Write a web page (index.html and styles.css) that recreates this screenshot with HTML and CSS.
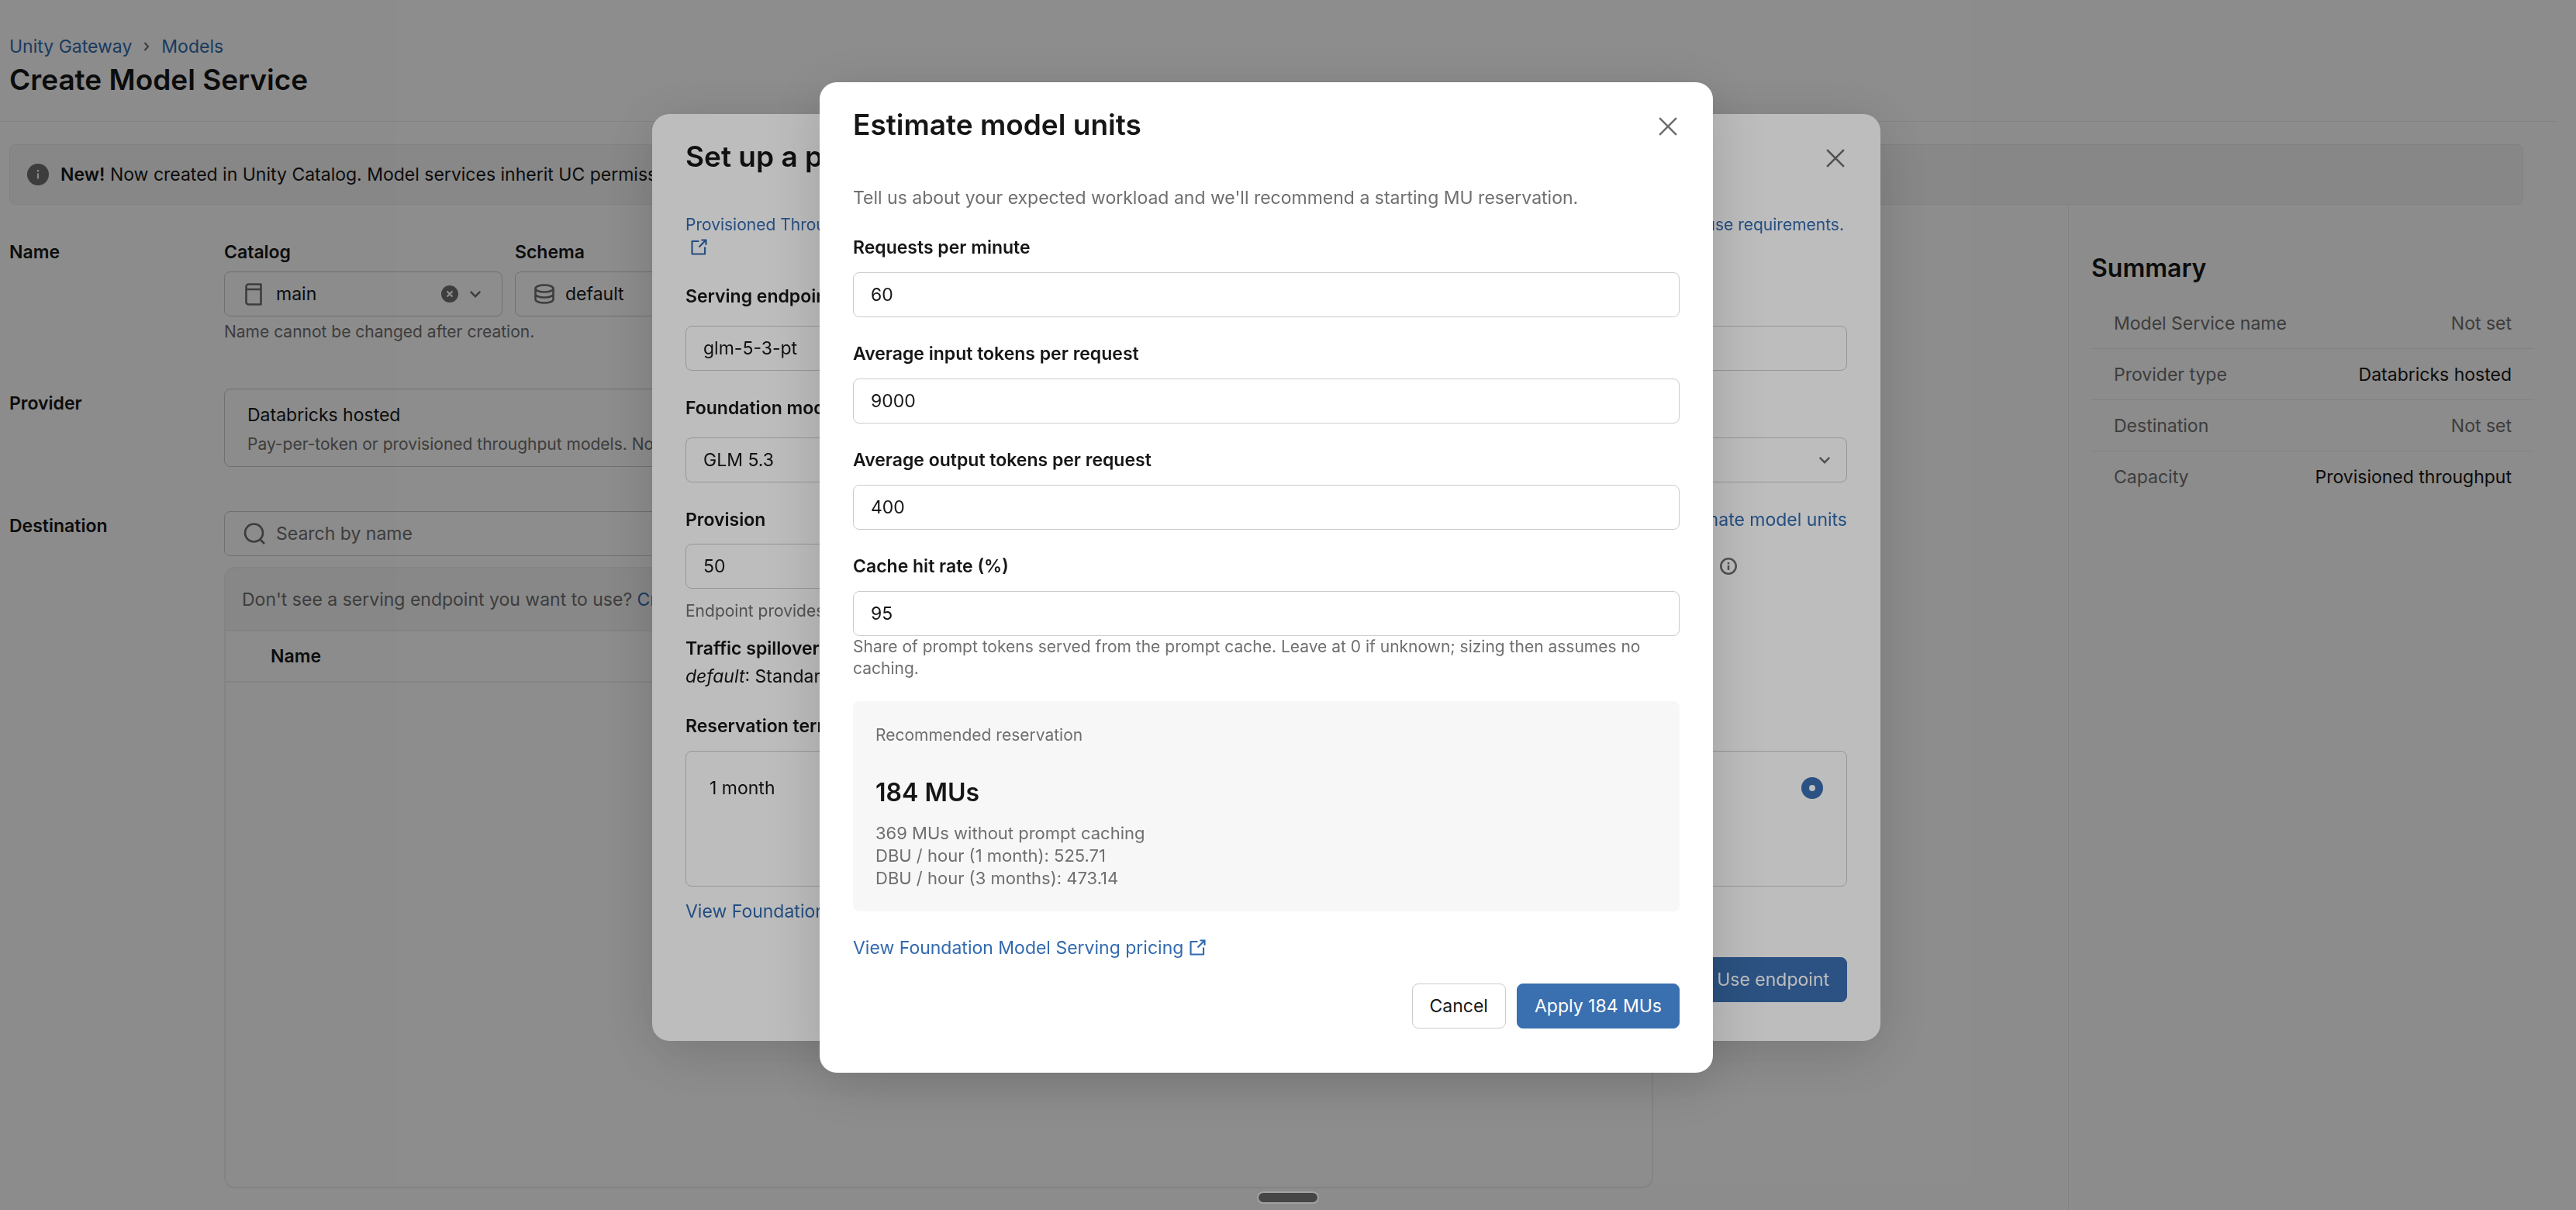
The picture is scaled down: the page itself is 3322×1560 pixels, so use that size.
FILE: index.html
```html
<!DOCTYPE html>
<html lang="en">
<head>
    <meta charset="UTF-8">
    <meta name="viewport" content="width=device-width, initial-scale=1.0">
    <title>Create Model Service</title>
    <link rel="stylesheet" href="styles.css">
</head>
<body>
    <!-- shared icons -->
    <svg class="sprite" aria-hidden="true">
        <symbol id="icon-close" viewBox="0 0 16 16">
            <path d="M2.2 2.2l11.6 11.6M13.8 2.2L2.2 13.8" fill="none" stroke="currentColor" stroke-width="1.4"/>
        </symbol>
        <symbol id="icon-chevron" viewBox="0 0 16 16">
            <path d="M3 5.5l5 5 5-5" fill="none" stroke="currentColor" stroke-width="2"/>
        </symbol>
        <symbol id="icon-external" viewBox="0 0 16 16">
            <path fill="currentColor" d="M10 1h5v5h-1.5V3.56L8.53 8.53 7.47 7.47l4.97-4.97H10z"/>
            <path fill="currentColor" d="M1 2.75A.75.75 0 0 1 1.75 2H8v1.5H2.5v10h10V8H14v6.25a.75.75 0 0 1-.75.75H1.75a.75.75 0 0 1-.75-.75z"/>
        </symbol>
    </svg>

    <div class="page">
        <header class="page-header">
            <nav class="breadcrumbs">
                <a href="#">Unity Gateway</a>
                <svg class="crumb-arrow" viewBox="0 0 8 12"><path d="M1.5 1l4.5 5-4.5 5" fill="none" stroke="currentColor" stroke-width="2"/></svg>
                <a href="#">Models</a>
            </nav>
            <h1>Create Model Service</h1>
        </header>

        <div class="banner">
            <svg class="banner-icon" viewBox="0 0 28 28">
                <circle cx="14" cy="14" r="14" fill="currentColor"/>
                <path d="M14 12.5v7M14 8v2.4" stroke="#f6f6f6" stroke-width="2.2"/>
            </svg>
            <p><strong>New!</strong> Now created in Unity Catalog. Model services inherit UC permissions.</p>
        </div>

        <div class="content">
            <main class="form">
                <section class="form-row">
                    <h3>Name</h3>
                    <div>
                        <div class="name-fields">
                            <div class="name-field">
                                <label for="catalog">Catalog</label>
                                <div class="control">
                                    <svg class="catalog-icon" viewBox="0 0 22 29">
                                        <path d="M20.5 1.5v26H4.5a3 3 0 0 1-3-3v-20a3 3 0 0 1 3-3zM1.8 8h18.7" fill="none" stroke="currentColor" stroke-width="2.6" stroke-linejoin="round"/>
                                    </svg>
                                    <select id="catalog"><option>main</option></select>
                                    <button type="button" class="clear" aria-label="Clear catalog">
                                        <svg viewBox="0 0 22 22">
                                            <circle cx="11" cy="11" r="11" fill="currentColor"/>
                                            <path d="M7.5 7.5l7 7M14.5 7.5l-7 7" stroke="#fff" stroke-width="2.2"/>
                                        </svg>
                                    </button>
                                    <svg class="chevron"><use href="#icon-chevron"/></svg>
                                </div>
                            </div>
                            <div class="name-field">
                                <label for="schema">Schema</label>
                                <div class="control">
                                    <svg class="schema-icon" viewBox="0 0 26 26">
                                        <g fill="none" stroke="currentColor" stroke-width="2.6">
                                            <ellipse cx="13" cy="6" rx="11.5" ry="4.5"/>
                                            <path d="M1.5 6v14c0 2.5 5 4.5 11.5 4.5s11.5-2 11.5-4.5V6M1.5 13c0 2.5 5 4.5 11.5 4.5s11.5-2 11.5-4.5"/>
                                        </g>
                                    </svg>
                                    <select id="schema"><option>default</option></select>
                                    <svg class="chevron"><use href="#icon-chevron"/></svg>
                                </div>
                            </div>
                        </div>
                        <p class="hint">Name cannot be changed after creation.</p>
                    </div>
                </section>

                <section class="form-row">
                    <h3 class="beside-box">Provider</h3>
                    <div class="provider-card">
                        <p>Databricks hosted</p>
                        <p class="small">Pay-per-token or provisioned throughput models. No setup required.</p>
                    </div>
                </section>

                <section class="form-row destination">
                    <h3 class="beside-box">Destination</h3>
                    <div class="destination-body">
                        <div class="control">
                            <svg class="search-icon" viewBox="0 0 28 28">
                                <circle cx="13.5" cy="13" r="11.5" fill="none" stroke="currentColor" stroke-width="2.6"/>
                                <path d="M21 21l6 6" stroke="currentColor" stroke-width="2.6"/>
                            </svg>
                            <input type="text" placeholder="Search by name" aria-label="Search by name">
                        </div>
                        <div class="endpoint-panel">
                            <p class="endpoint-note">Don't see a serving endpoint you want to use? <a href="#">Create</a></p>
                            <table>
                                <thead>
                                    <tr><th>Name</th></tr>
                                </thead>
                            </table>
                        </div>
                    </div>
                </section>
            </main>

            <aside class="summary">
                <h2>Summary</h2>
                <dl>
                    <div><dt>Model Service name</dt><dd class="unset">Not set</dd></div>
                    <div><dt>Provider type</dt><dd>Databricks hosted</dd></div>
                    <div><dt>Destination</dt><dd class="unset">Not set</dd></div>
                    <div><dt>Capacity</dt><dd>Provisioned throughput</dd></div>
                </dl>
            </aside>
        </div>
    </div>

    <!-- Provisioned throughput endpoint -->
    <div class="backdrop"></div>
    <div class="modal-wrap">
        <div class="modal modal-endpoint" role="dialog" aria-labelledby="endpoint-title">
            <div class="modal-header">
                <h2 id="endpoint-title">Set up a provisioned endpoint</h2>
                <button type="button" class="close" aria-label="Close"><svg><use href="#icon-close"/></svg></button>
            </div>
            <a href="#" class="terms">
                <span class="terms-line"><span>Provisioned Throughput endpoints are subject to</span> <span>these model license and use requirements.</span></span>
                <svg class="external"><use href="#icon-external"/></svg>
            </a>
            <div class="endpoint-field">
                <label for="endpoint-name">Serving endpoint name</label>
                <input type="text" id="endpoint-name" class="text-input" value="glm-5-3-pt">
            </div>
            <div class="endpoint-field">
                <label for="foundation-model">Foundation model</label>
                <div class="control model-select">
                    <select id="foundation-model"><option>GLM 5.3</option></select>
                    <svg class="chevron"><use href="#icon-chevron"/></svg>
                </div>
            </div>
            <div class="provision">
                <div class="provision-label">
                    <label for="provision">Provision</label>
                    <a href="#">Estimate model units</a>
                </div>
                <div class="provision-row">
                    <input type="text" id="provision" class="text-input" value="50">
                    <svg class="info-icon" viewBox="0 0 22 22">
                        <circle cx="11" cy="11" r="9.7" fill="none" stroke="currentColor" stroke-width="2.6"/>
                        <path d="M11 10v6M11 6v2.4" stroke="currentColor" stroke-width="2.6"/>
                    </svg>
                </div>
                <p class="small">Endpoint provides reserved capacity.</p>
            </div>
            <div class="spillover">
                <h4>Traffic spillover</h4>
                <p><em>default</em>: Standard</p>
            </div>
            <h4>Reservation term</h4>
            <div class="term-card">
                <label for="term-month">1 month</label>
                <input type="radio" id="term-month" name="term" checked>
            </div>
            <a href="#" class="pricing">View Foundation Model Serving pricing</a>
            <div class="modal-footer">
                <button type="button" class="btn btn-primary">Use endpoint</button>
            </div>
        </div>
    </div>

    <!-- Model unit estimate -->
    <div class="backdrop"></div>
    <div class="modal-wrap">
        <form class="modal modal-estimate" role="dialog" aria-labelledby="estimate-title">
            <div class="modal-header">
                <h2 id="estimate-title">Estimate model units</h2>
                <button type="button" class="close" aria-label="Close"><svg><use href="#icon-close"/></svg></button>
            </div>
            <p class="intro">Tell us about your expected workload and we'll recommend a starting MU reservation.</p>
            <div class="estimate-fields">
                <div class="field">
                    <label for="rpm">Requests per minute</label>
                    <input type="text" id="rpm" class="text-input" value="60">
                </div>
                <div class="field">
                    <label for="input-tokens">Average input tokens per request</label>
                    <input type="text" id="input-tokens" class="text-input" value="9000">
                </div>
                <div class="field">
                    <label for="output-tokens">Average output tokens per request</label>
                    <input type="text" id="output-tokens" class="text-input" value="400">
                </div>
                <div class="field">
                    <label for="cache-rate">Cache hit rate (%)</label>
                    <input type="text" id="cache-rate" class="text-input" value="95">
                    <p class="small">Share of prompt tokens served from the prompt cache. Leave at 0 if unknown; sizing then assumes no caching.</p>
                </div>
            </div>
            <div class="result">
                <p class="small">Recommended reservation</p>
                <p class="result-value">184 MUs</p>
                <ul>
                    <li>369 MUs without prompt caching</li>
                    <li>DBU / hour (1 month): 525.71</li>
                    <li>DBU / hour (3 months): 473.14</li>
                </ul>
            </div>
            <a href="#" class="pricing">View Foundation Model Serving pricing <svg class="external"><use href="#icon-external"/></svg></a>
            <div class="modal-footer">
                <button type="button" class="btn">Cancel</button>
                <button type="submit" class="btn btn-primary">Apply 184 MUs</button>
            </div>
        </form>
    </div>

    <div class="drag-handle"></div>
</body>
</html>
```

FILE: styles.css
```css
* {
    box-sizing: border-box;
}

body {
    margin: 0;
    font-family: Inter, "Liberation Sans", sans-serif;
    font-size: 23px;
    line-height: 32px;
    color: #161616;
    background-color: #fff;
    overflow: hidden;
}

h1, h2, h3, h4, p, dl, dd, ul {
    margin: 0;
    padding: 0;
}

h1, h2 {
    font-size: 37px;
    line-height: 54px;
    font-weight: 600;
}

h3, h4, label, strong {
    font-size: 23px;
    font-weight: 600;
}

a {
    color: #326aae;
    text-decoration: none;
}

input, select, button {
    font: inherit;
    color: inherit;
}

.sprite {
    display: none;
}

.small {
    font-size: 21px;
    line-height: 29px;
    color: #6f6f6f;
}

/* Page */
.page {
    display: flex;
    flex-direction: column;
    min-height: 100vh;
    margin-right: 25px;
}

.page-header {
    padding: 44px 12px 26px;
    border-bottom: 1px solid #ebebeb;
}

.breadcrumbs {
    display: flex;
    align-items: center;
    gap: 15px;
}

.crumb-arrow {
    width: 8px;
    height: 12px;
    color: #6f6f6f;
}

.banner {
    display: flex;
    align-items: center;
    gap: 15px;
    margin: 29px 43px 0 12px;
    padding: 22px;
    border: 1px solid #ebebeb;
    border-radius: 8px;
    background-color: #f6f6f6;
}

.banner-icon {
    width: 28px;
    height: 28px;
    color: #6f6f6f;
}

.content {
    flex: 1;
    display: flex;
    justify-content: space-between;
}

/* Form */
.form {
    display: flex;
    flex-direction: column;
    gap: 57px;
    width: 100%;
    max-width: 2132px;
    padding: 45px 0 28px 12px;
}

.form-row {
    display: grid;
    grid-template-columns: 277px 1fr;
}

.beside-box {
    padding-top: 3px;
}

.name-fields {
    display: flex;
    gap: 16px;
}

.name-field {
    width: 359px;
}

.name-field label {
    display: block;
    margin-bottom: 9px;
}

.control {
    display: flex;
    align-items: center;
    height: 58px;
    padding: 0 24px;
    border: 1px solid #cbcbcb;
    border-radius: 8px;
}

.control select, .control input {
    flex: 1;
    min-width: 0;
    padding: 0;
    border: none;
    background: none;
    appearance: none;
    outline: none;
}

.control input::placeholder {
    color: #6f6f6f;
    opacity: 1;
}

.control svg {
    flex: none;
    color: #6f6f6f;
}

.catalog-icon {
    width: 22px;
    height: 29px;
    margin: 0 18px 0 2px;
}

.schema-icon {
    width: 26px;
    height: 26px;
    margin-right: 14px;
}

.search-icon {
    width: 28px;
    height: 28px;
    margin-right: 14px;
}

.clear {
    display: flex;
    margin-right: 12px;
    padding: 0;
    border: none;
    background: none;
}

.clear svg {
    width: 22px;
    height: 22px;
}

.chevron {
    width: 20px;
    height: 20px;
}

.hint {
    margin-top: 4px;
    font-size: 21px;
    color: #6f6f6f;
}

.provider-card {
    padding: 17px 29px 14px;
    border: 1px solid #cbcbcb;
    border-radius: 8px;
}

.provider-card .small {
    margin-top: 7px;
}

.destination {
    flex: 1;
}

.destination-body {
    display: flex;
    flex-direction: column;
    gap: 14px;
}

.endpoint-panel {
    flex: 1;
    border: 2px solid #efefef;
    border-radius: 14px;
    overflow: hidden;
}

.endpoint-note {
    padding: 24px 21px 23px;
    border-bottom: 2px solid #efefef;
    background-color: #f6f6f6;
    color: #6f6f6f;
}

.endpoint-panel table {
    width: 100%;
    border-collapse: collapse;
}

.endpoint-panel th {
    padding: 16px 58px;
    border-bottom: 2px solid #efefef;
    font-weight: 600;
    text-align: left;
}

/* Summary */
.summary {
    flex: none;
    width: 630px;
    padding: 60px 29px 0;
    border-left: 1px solid #efefef;
}

.summary h2 {
    margin-bottom: 16px;
    font-size: 32px;
    line-height: 44px;
}

.summary dl div {
    display: flex;
    justify-content: space-between;
    padding: 17px 29px 16px;
    border-bottom: 1px solid #ebebeb;
}

.summary dl div:last-child {
    border-bottom: none;
}

.summary dt, .summary .unset {
    color: #6f6f6f;
}

/* Modals */
.backdrop {
    position: fixed;
    inset: 0;
    background-color: rgba(0, 0, 0, 0.26);
}

.modal-wrap {
    position: fixed;
    inset: 0;
    display: flex;
    align-items: center;
    justify-content: center;
    padding: 0 56px 72px 0;
}

.modal {
    width: 100%;
    padding: 28px 43px 50px;
    border-radius: 22px;
    background-color: #fff;
    box-shadow: 0 14px 72px rgba(0, 0, 0, 0.16);
}

.modal-endpoint {
    max-width: 1584px;
}

.modal-estimate {
    max-width: 1152px;
    padding-bottom: 57px;
}

.modal-header {
    display: flex;
    align-items: center;
    justify-content: space-between;
}

.close {
    display: flex;
    padding: 4px 0 0;
    border: none;
    background: none;
    color: #6f6f6f;
}

.close svg {
    width: 30px;
    height: 30px;
}

.text-input {
    display: block;
    width: 100%;
    height: 58px;
    padding: 0 22px;
    border: 1px solid #cbcbcb;
    border-radius: 8px;
    background: none;
}

.external {
    width: 23px;
    height: 23px;
}

.modal-footer {
    display: flex;
    justify-content: flex-end;
    gap: 14px;
}

.btn {
    height: 58px;
    padding: 0 22px;
    border: 1px solid #cbcbcb;
    border-radius: 8px;
    background-color: #fff;
    cursor: pointer;
}

.btn-primary {
    border-color: #3a6fb0;
    background-color: #3a6fb0;
    color: #fff;
}

/* Endpoint modal */
.terms {
    display: block;
    margin: 46px 0 33px;
    font-size: 21px;
    line-height: 29px;
}

.terms-line {
    display: flex;
    justify-content: space-between;
    padding-right: 4px;
}

.terms .external {
    display: block;
    height: 29px;
    margin-left: 6px;
}

.endpoint-field {
    margin-bottom: 32px;
}

.endpoint-field label {
    display: block;
    margin-bottom: 22px;
}

.model-select {
    padding: 0 18px 0 22px;
}

.provision-label {
    display: flex;
    justify-content: space-between;
    margin-bottom: 15px;
}

.provision-row {
    display: flex;
    align-items: center;
    gap: 16px;
    margin-bottom: 14px;
    padding-right: 142px;
}

.info-icon {
    flex: none;
    width: 22px;
    height: 22px;
    color: #6f6f6f;
}

.spillover {
    margin: 18px 0 32px;
}

.spillover p {
    margin-top: 4px;
}

.term-card {
    display: flex;
    align-items: flex-start;
    justify-content: space-between;
    min-height: 175px;
    margin: 16px 0;
    padding: 31px 30px;
    border: 1px solid #cbcbcb;
    border-radius: 8px;
}

.term-card label {
    font-weight: 400;
}

.term-card input {
    width: 28px;
    height: 28px;
    margin: 2px 0;
    border: 10px solid #3a6fb0;
    border-radius: 50%;
    background-color: #fff;
    appearance: none;
}

.modal-endpoint .modal-footer {
    margin-top: 43px;
}

/* Estimate modal */
.intro {
    margin: 51px 0 32px;
    color: #6f6f6f;
}

.estimate-fields {
    display: flex;
    flex-direction: column;
    gap: 31px;
}

.field label {
    display: block;
    margin-bottom: 16px;
}

.field .small {
    line-height: 28px;
}

.result {
    margin: 28px 0 31px;
    padding: 29px 29px 28px;
    border-radius: 8px;
    background-color: #f7f7f7;
}

.result-value {
    margin: 38px 0 16px;
    font-size: 32px;
    line-height: 44px;
    font-weight: 600;
}

.result ul {
    list-style: none;
    font-size: 22px;
    line-height: 29px;
    color: #6f6f6f;
}

.pricing {
    display: flex;
    align-items: center;
    gap: 7px;
}

.modal-estimate .modal-footer {
    margin-top: 30px;
}

/* Resize handle of the bottom drawer */
.drag-handle {
    position: fixed;
    bottom: 8px;
    left: 50%;
    width: 80px;
    height: 16px;
    margin-left: -40px;
    border: 2px solid #a2a2a2;
    border-radius: 8px;
    background-color: #464646;
}
```
